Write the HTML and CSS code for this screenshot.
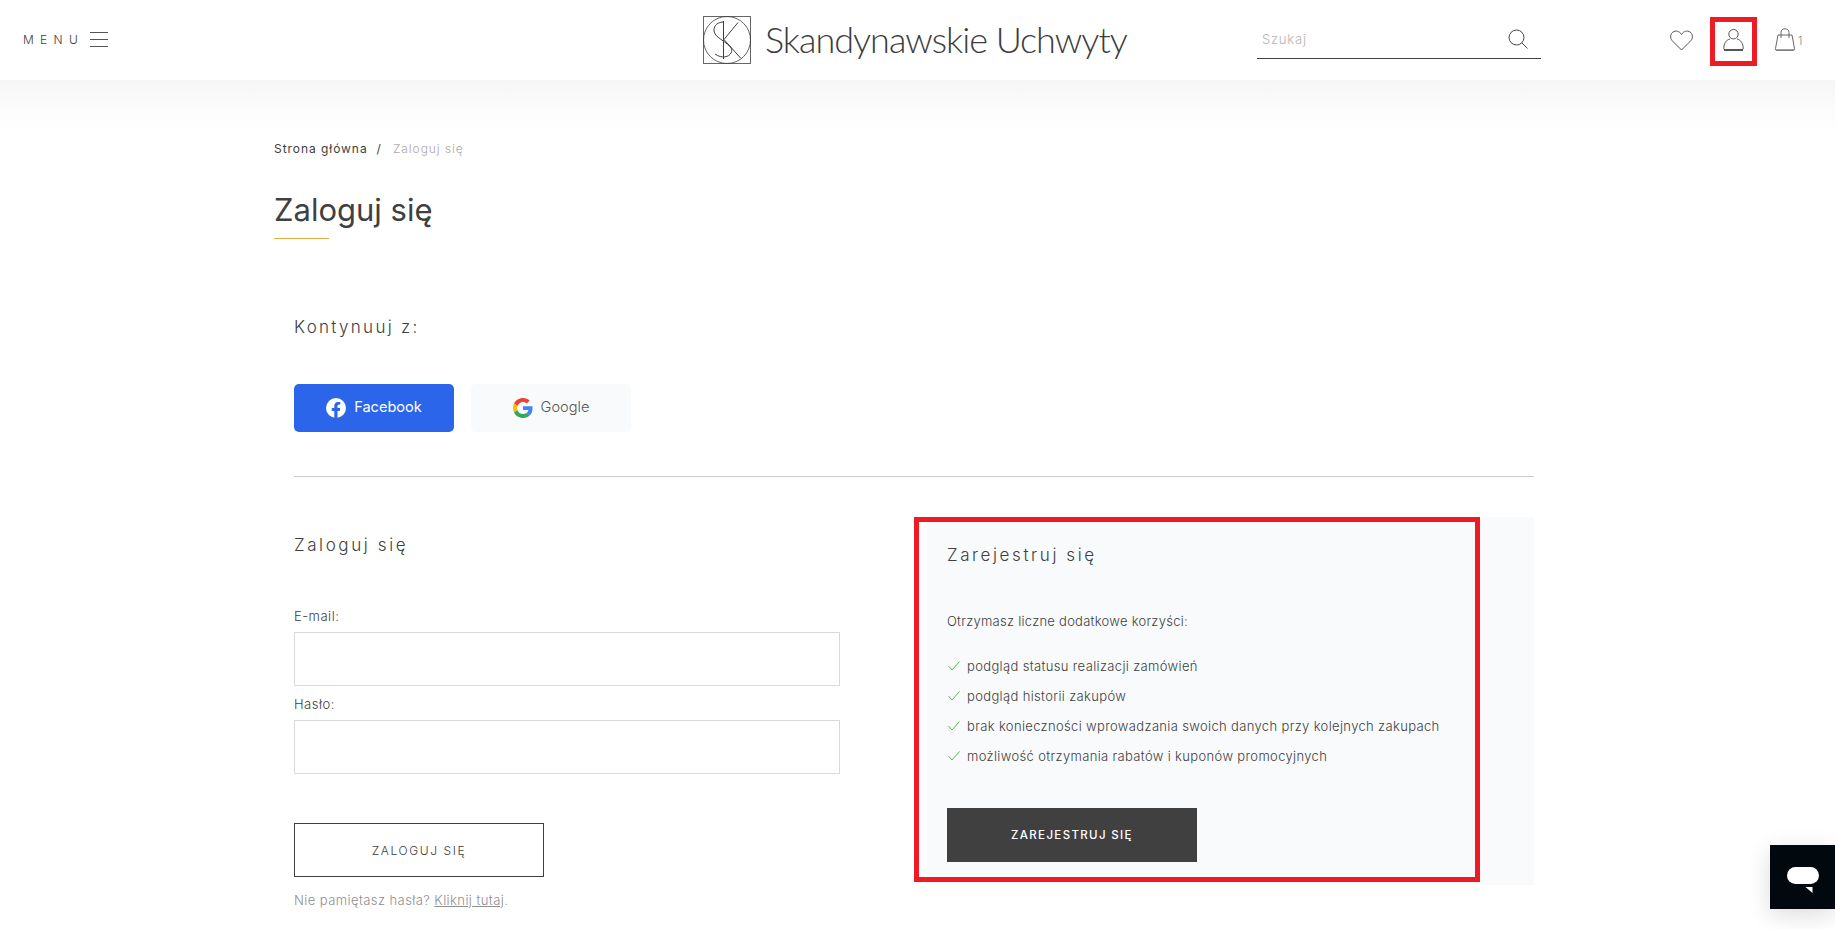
FILE: index.html
```html
<!DOCTYPE html>
<html lang="pl">
<head>
<meta charset="utf-8">
<title>Zaloguj się</title>
<link rel="stylesheet" href="styles.css">
</head>
<body>
<header class="topbar">
  <div class="menu">
    <span class="menu-label">MENU</span>
    <span class="burger"><i></i><i></i><i></i></span>
  </div>
  <a class="logo">
    <svg class="logo-mark" width="48" height="48" viewBox="0 0 48 48" fill="none" stroke="#3f3f3f">
      <rect x=".5" y=".5" width="47" height="47" stroke="#666"/>
      <circle cx="24" cy="24" r="23.500" stroke-width=".8"/>
      <path d="M20.500 5v38M21 6C15 6 11 9 11 14c0 6 7 9 12 13 5 4 7 6 5 10-2 4-9 6-16 1M35 6.500 21 23.500l16.500 18.500" stroke-width="1"/>
    </svg>
    <span class="logo-text">Skandynawskie Uchwyty</span>
  </a>
  <form class="search">
    <span class="search-hint">Szukaj</span>
    <svg width="20" height="20" viewBox="0 0 20 20" fill="none" stroke="#444"><circle cx="8.500" cy="8.500" r="7.500"/><path d="m14 14 5.500 5.500"/></svg>
  </form>
  <nav class="tools">
    <svg class="tool-heart" width="23" height="21" viewBox="0 0 23 21" fill="none" stroke="#555"><path d="M11.500 20 2.300 10.800C-.5 8 .5 3.500 3 2c2.800-1.700 6.500-1 8.500 2.500C13.500 1 17.200.3 20 2c2.500 1.500 3.500 6 .7 8.800z"/></svg>
    <svg class="tool-user" width="21" height="22" viewBox="0 0 21 22" fill="none" stroke="#555"><circle cx="10.500" cy="5.200" r="4.700"/><path d="M7 10C3 11 .8 14.500.8 19.500q0 1.500 1.500 1.500h16.400q1.500 0 1.500-1.500C20.200 14.500 18 11 14 10"/><path d="M1 21h19" stroke="#333" stroke-width="1.400"/></svg>
    <span class="bag">
      <svg width="20" height="23" viewBox="0 0 20 23" fill="none" stroke="#666"><path d="M3 7h14l2.500 13.500q.3 2-1.500 2H2q-1.800 0-1.500-2z"/><path d="M6 10V4.500C6 2 7.500.8 10 .8s4 1.200 4 3.700V10"/><path d="M1 22h18" stroke-width="1.600" stroke="#888"/></svg>
      <span class="bag-count">1</span>
    </span>
  </nav>
</header>

<main class="page">
  <nav class="crumbs"><a>Strona główna</a><span class="crumb-sep">/</span><span class="crumb-here">Zaloguj się</span></nav>
  <h1 class="page-title">Zaloguj się</h1>
  <div class="title-rule"></div>

  <section class="content">
    <h2 class="continue">Kontynuuj z:</h2>
    <div class="social">
      <a class="social-btn social-fb">
        <svg width="20" height="20" viewBox="0 0 20 20"><circle cx="10" cy="10" r="10" fill="#fff"/><path d="M8.300 20v-7H5.800v-3h2.500V7.800c0-2.500 1.500-3.900 3.800-3.900 1.100 0 2.200.2 2.200.2v2.500h-1.200c-1.200 0-1.600.8-1.600 1.500V10h2.700l-.4 3h-2.300v7z" fill="#2a65ea"/></svg>
        <span class="social-name">Facebook</span>
      </a>
      <a class="social-btn social-g">
        <svg width="20" height="20" viewBox="0 0 48 48"><path fill="#ea4335" d="M24 9.500c3.500 0 6.700 1.300 9.200 3.500l6.900-6.900C35.900 2.200 30.300 0 24 0 14.600 0 6.500 5.400 2.600 13.200l8 6.200C12.500 13.600 17.800 9.500 24 9.500z"/><path fill="#4285f4" d="M46.900 24.500c0-1.600-.1-3.100-.4-4.500H24v9h12.900c-.6 3-2.200 5.500-4.800 7.200l7.700 6c4.500-4.200 7.100-10.300 7.100-17.700z"/><path fill="#fbbc05" d="M10.500 28.600C10 27.200 9.800 25.600 9.800 24s.3-3.200.8-4.600l-8-6.200C.9 16.500 0 20.100 0 24s.9 7.500 2.600 10.800z"/><path fill="#34a853" d="M24 48c6.500 0 11.900-2.100 15.900-5.800l-7.700-6c-2.200 1.400-4.900 2.300-8.200 2.300-6.200 0-11.500-4.200-13.400-9.900l-8 6.200C6.500 42.600 14.600 48 24 48z"/></svg>
        <span class="social-name">Google</span>
      </a>
    </div>
    <hr class="divider">
    <div class="columns">
      <form class="login">
        <h2 class="sub-title">Zaloguj się</h2>
        <div class="fields">
          <label class="field"><span class="field-label">E-mail:</span><input class="field-input" type="text"></label>
          <label class="field"><span class="field-label">Hasło:</span><input class="field-input" type="password"></label>
        </div>
        <button class="btn-outline" type="button">ZALOGUJ SIĘ</button>
        <p class="forgot">Nie pamiętasz hasła? <a>Kliknij tutaj</a>.</p>
      </form>
      <aside class="register">
        <h2 class="sub-title">Zarejestruj się</h2>
        <p class="benefits-lead">Otrzymasz liczne dodatkowe korzyści:</p>
        <ul class="benefits">
          <li><svg width="12" height="10" viewBox="0 0 12 10" fill="none" stroke="#5cb85c"><path d="m.5 5 3.500 4L11.500.5"/></svg>podgląd statusu realizacji zamówień</li>
          <li><svg width="12" height="10" viewBox="0 0 12 10" fill="none" stroke="#5cb85c"><path d="m.5 5 3.500 4L11.500.5"/></svg>podgląd historii zakupów</li>
          <li><svg width="12" height="10" viewBox="0 0 12 10" fill="none" stroke="#5cb85c"><path d="m.5 5 3.500 4L11.500.5"/></svg>brak konieczności wprowadzania swoich danych przy kolejnych zakupach</li>
          <li><svg width="12" height="10" viewBox="0 0 12 10" fill="none" stroke="#5cb85c"><path d="m.5 5 3.500 4L11.500.5"/></svg>możliwość otrzymania rabatów i kuponów promocyjnych</li>
        </ul>
        <button class="btn-dark" type="button">ZAREJESTRUJ SIĘ</button>
      </aside>
    </div>
  </section>
</main>

<div class="mark mark-account"></div>
<div class="mark mark-register"></div>
<div class="chat">
  <svg width="34" height="26" viewBox="0 0 34 26"><rect x="1" y="0" width="32" height="17" rx="8.500" fill="#fff"/><path d="M19.500 20h7v6z" fill="#fff"/></svg>
</div>
</body>
</html>
```
FILE: styles.css
```css
* { box-sizing: border-box; }
html, body { margin: 0; height: 929px; overflow: hidden; }
body {
  position: relative;
  background: #fff;
  color: #404040;
  font-family: Inter, "Noto Sans", sans-serif;
  font-size: 12px;
}
h1, h2, p, ul { margin: 0; padding: 0; }
a { color: inherit; }

.topbar {
  display: grid;
  grid-template-columns: 703px 554px 284px 1fr;
  align-items: center;
  height: 80px;
  background: #fff;
}
.menu { display: flex; align-items: center; padding-left: 23px; gap: 6px; }
.menu-label { padding-bottom: 2px; font-size: 12px; font-weight: 300; letter-spacing: 6.300px; }
.burger { display: flex; flex-direction: column; gap: 6px; width: 18px; margin-bottom: 1px; }
.burger i { display: block; height: 1px; background: #555; }
.logo { display: flex; align-items: center; gap: 14px; }
.logo-mark { flex: none; }
.logo-text {
  padding-bottom: 2px;
  font-family: Lato, sans-serif;
  font-weight: 300;
  font-size: 36px;
  line-height: 44px;
  letter-spacing: -1px;
  white-space: nowrap;
  color: #3c3c3c;
}
.search {
  display: flex;
  align-items: center;
  justify-content: space-between;
  align-self: start;
  height: 33px;
  margin-top: 26px;
  padding: 0 13px 6px 5px;
  border-bottom: 1px solid #404040;
}
.search-hint { color: #b5b5b5; font-size: 13px; font-weight: 300; letter-spacing: .8px; }
.tools { display: flex; align-items: center; padding-left: 129px; }
.tool-heart { margin-right: 30px; }
.tool-user { margin-right: 31px; }
.bag { display: flex; align-items: flex-end; gap: 3px; margin-bottom: 2px; }
.bag-count { font-size: 11px; color: #888; font-weight: 300; line-height: 20px; }

.page {
  padding: 59px 0 0 274px;
  background: linear-gradient(#f6f6f6, #fcfcfc 55%, #fff) no-repeat top / 100% 55px;
}
.crumbs { display: flex; line-height: 20px; font-size: 12px; letter-spacing: .95px; }
.crumb-sep { margin: 0 11px 0 9px; }
.crumb-here { color: #b0a8a8; font-weight: 300; }
.page-title { margin-top: 31px; font-size: 31px; line-height: 40px; font-weight: 400; }
.title-rule { width: 55px; height: 1px; margin-top: 8px; background: #e2ad46; }

.content { width: 1240px; margin-left: 20px; }
.continue { margin-top: 76px; font-size: 17px; line-height: 24px; font-weight: 300; letter-spacing: 2.300px; }
.social { display: flex; gap: 17px; margin-top: 45px; }
.social-btn {
  display: flex;
  align-items: center;
  justify-content: center;
  gap: 8px;
  width: 160px;
  height: 48px;
  border-radius: 5px;
  font-size: 14.600px;
  font-weight: 300;
}
.social-name { padding-bottom: 2px; }
.social-fb { background: #2a65ea; color: #fff; font-weight: 400; }
.social-g { background: #f9fafc; color: #555; }
.divider { height: 1px; margin: 44px 0 0; border: 0; background: #ccc; }
.columns { display: grid; grid-template-columns: 546px 607px; gap: 87px; align-items: start; margin-top: 40px; }
.login { padding-top: 16px; }
.sub-title { font-size: 17px; line-height: 24px; font-weight: 300; letter-spacing: 2.600px; }
.fields { margin-top: 49px; }
.field { display: block; margin-bottom: 8px; }
.field-label { display: block; margin-bottom: 6px; padding-top: 1px; line-height: 19px; font-size: 13px; font-weight: 300; letter-spacing: .5px; }
.field-input { display: block; width: 100%; height: 54px; border: 1px solid #d9d9d9; background: #fff; }
.btn-outline {
  display: block;
  width: 250px;
  height: 54px;
  margin-top: 49px;
  border: 1px solid #404040;
  background: #fff;
  color: #404040;
  font: 300 12px Inter, sans-serif;
  letter-spacing: 1.600px;
}
.forgot { margin-top: 13px; line-height: 20px; font-size: 13px; font-weight: 300; letter-spacing: .42px; color: #8f8f8f; }
.forgot a { text-decoration: underline; }
.register { padding: 26px 0 23px 20px; background: #f9fafc; }
.benefits-lead { margin-top: 44px; line-height: 20px; font-size: 13px; font-weight: 300; letter-spacing: .26px; }
.benefits { margin-top: 20px; list-style: none; }
.benefits li { display: flex; align-items: center; gap: 7px; height: 30px; padding-left: 1px; font-size: 13px; font-weight: 300; letter-spacing: .35px; }
.btn-dark {
  display: block;
  width: 250px;
  height: 54px;
  margin-top: 37px;
  border: 0;
  background: #404040;
  color: #fff;
  font: 500 11.500px Inter, sans-serif;
  letter-spacing: 1.350px;
}

.mark { position: absolute; border: 5px solid #ed1c24; }
.mark-account { left: 1710px; top: 17px; width: 47px; height: 49px; }
.mark-register { left: 914px; top: 517px; width: 566px; height: 365px; }
.chat {
  position: absolute;
  left: 1770px;
  top: 845px;
  display: flex;
  align-items: center;
  justify-content: center;
  width: 65px;
  height: 64px;
  padding-top: 6px;
  background: #01080e;
  box-shadow: 0 6px 24px rgba(1, 8, 14, .14);
}
```
